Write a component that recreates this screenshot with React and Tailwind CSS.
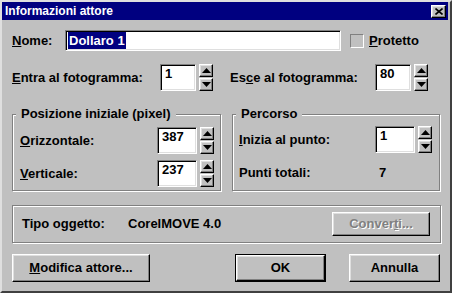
import React from "react";

const font = { fontFamily: '"Liberation Sans", Arial, sans-serif' };

const sunken =
  "bg-white border border-t-[#808080] border-l-[#808080] border-b-white border-r-white shadow-[inset_1px_1px_0_#000,inset_-1px_-1px_0_#dfdfdf]";
const raised =
  "bg-[#c0c0c0] border border-t-white border-l-white border-b-black border-r-black shadow-[inset_-1px_-1px_0_#808080,inset_1px_1px_0_#dfdfdf]";

function Arrow({ down }) {
  return (
    <svg width="9" height="5" viewBox="0 0 9 5" className="block">
      {down ? <path d="M0 0h9L4.5 5z" fill="#000" /> : <path d="M4.5 0L9 5H0z" fill="#000" />}
    </svg>
  );
}

function Spin() {
  return (
    <div className="flex flex-col w-[14px] h-[27px] ml-[3px]">
      <div className={`${raised} h-[13px] flex items-center justify-center`}>
        <Arrow />
      </div>
      <div className="h-[1px]" />
      <div className={`${raised} h-[13px] flex items-center justify-center`}>
        <Arrow down />
      </div>
    </div>
  );
}

function NumField({ value, w = "w-[36px]", h = "h-[27px]" }) {
  return (
    <div className="flex items-start">
      <div className={`${sunken} ${w} ${h} px-[4px] pt-[1px] text-[13px] font-bold leading-[16px]`}>{value}</div>
      <Spin />
    </div>
  );
}

function Group({ title, className, children }) {
  return (
    <div
      className={`relative h-[77px] border border-[#808080] shadow-[inset_1px_1px_0_#fff,1px_1px_0_#fff] ${className}`}
    >
      <span className="absolute left-[3px] top-[-9px] bg-[#c0c0c0] px-[5px] text-[13px] font-bold leading-[16px]">
        {title}
      </span>
      {children}
    </div>
  );
}

export default function App() {
  return (
    <div
      style={font}
      className="w-[452px] h-[293px] overflow-hidden bg-[#c0c0c0] text-black border-2 border-t-[#dfdfdf] border-l-[#dfdfdf] border-r-[#404040] border-b-[#404040] flex flex-col select-none"
    >
      {/* Title bar */}
      <div className="h-[18px] mr-[2px] bg-[#000080] flex items-center justify-between pl-[3px] pr-[2px]">
        <span className="text-white text-[12px] font-bold leading-none">Informazioni attore</span>
        <div className={`${raised} w-[15px] h-[13px] flex items-center justify-center`}>
          <svg width="8" height="7" viewBox="0 0 8 7">
            <path d="M0.5 0.5L7.5 6.5M7.5 0.5L0.5 6.5" stroke="#000" strokeWidth="1.6" />
          </svg>
        </div>
      </div>

      <div className="pl-[10px] pr-[10px] flex flex-col text-[13px] font-bold leading-[16px]">
        {/* Nome */}
        <div className="mt-[10px] h-[21px] flex items-center">
          <span className="w-[53px]">
            <u>N</u>ome:
          </span>
          <div className={`${sunken} w-[276px] h-[21px] flex items-center pl-[2px]`}>
            <span className="bg-[#000080] text-white px-[1px] leading-[17px]">Dollaro 1</span>
          </div>
          <div className="ml-[9px] w-[14px] h-[14px] bg-[#c0c0c0] border border-t-[#808080] border-l-[#808080] border-b-white border-r-white" />
          <span className="ml-[5px]">
            <u>P</u>rotetto
          </span>
        </div>

        {/* Fotogramma */}
        <div className="mt-[13px] h-[27px] flex items-center">
          <span className="w-[148px]">
            <u>E</u>ntra al fotogramma:
          </span>
          <NumField value="1" />
          <span className="ml-[17px] w-[145px]">
            Es<u>c</u>e al fotogramma:
          </span>
          <NumField value="80" />
        </div>

        {/* Groups */}
        <div className="mt-[23px] flex gap-[11px]">
          <Group title="Posizione iniziale (pixel)" className="w-[209px]">
            <div className="pl-[7px] pt-[12px] flex flex-col gap-[6px]">
              <div className="flex items-center h-[27px]">
                <span className="w-[137px]">
                  <u>O</u>rizzontale:
                </span>
                <NumField value="387" w="w-[40px]" h="h-[27px]" />
              </div>
              <div className="flex items-center h-[27px]">
                <span className="w-[137px]">
                  <u>V</u>erticale:
                </span>
                <NumField value="237" w="w-[40px]" h="h-[27px]" />
              </div>
            </div>
          </Group>
          <Group title="Percorso" className="w-[208px]">
            <div className="pl-[6px] pt-[11px] flex flex-col gap-[6px]">
              <div className="flex items-center h-[27px]">
                <span className="w-[136px]">
                  <u>I</u>nizia al punto:
                </span>
                <NumField value="1" w="w-[40px]" h="h-[27px]" />
              </div>
              <div className="flex items-center h-[27px]">
                <span className="w-[140px]">Punti totali:</span>
                <span>7</span>
              </div>
            </div>
          </Group>
        </div>

        {/* Tipo oggetto */}
        <div className="mt-[14px] h-[38px] w-[429px] border border-[#808080] shadow-[inset_1px_1px_0_#fff,1px_1px_0_#fff] flex items-center pl-[9px]">
          <span className="w-[106px]">Tipo oggetto:</span>
          <span className="w-[204px]">CorelMOVE 4.0</span>
          <div className={`${raised} w-[98px] h-[24px] flex items-center justify-center`}>
            <span className="text-[#808080] [text-shadow:1px_1px_0_#fff]">
              Conver<u>t</u>i...
            </span>
          </div>
        </div>

        {/* Buttons */}
        <div className="mt-[11px] h-[28px] flex items-center">
          <div className={`${raised} w-[138px] h-[28px] flex items-center justify-center`}>
            <span>
              <u>M</u>odifica attore...
            </span>
          </div>
          <div className="ml-[85px] w-[91px] h-[28px] border border-black">
            <div className={`${raised} w-full h-full flex items-center justify-center`}>OK</div>
          </div>
          <div className={`${raised} ml-[23px] w-[91px] h-[28px] flex items-center justify-center`}>Annulla</div>
        </div>
      </div>
    </div>
  );
}
